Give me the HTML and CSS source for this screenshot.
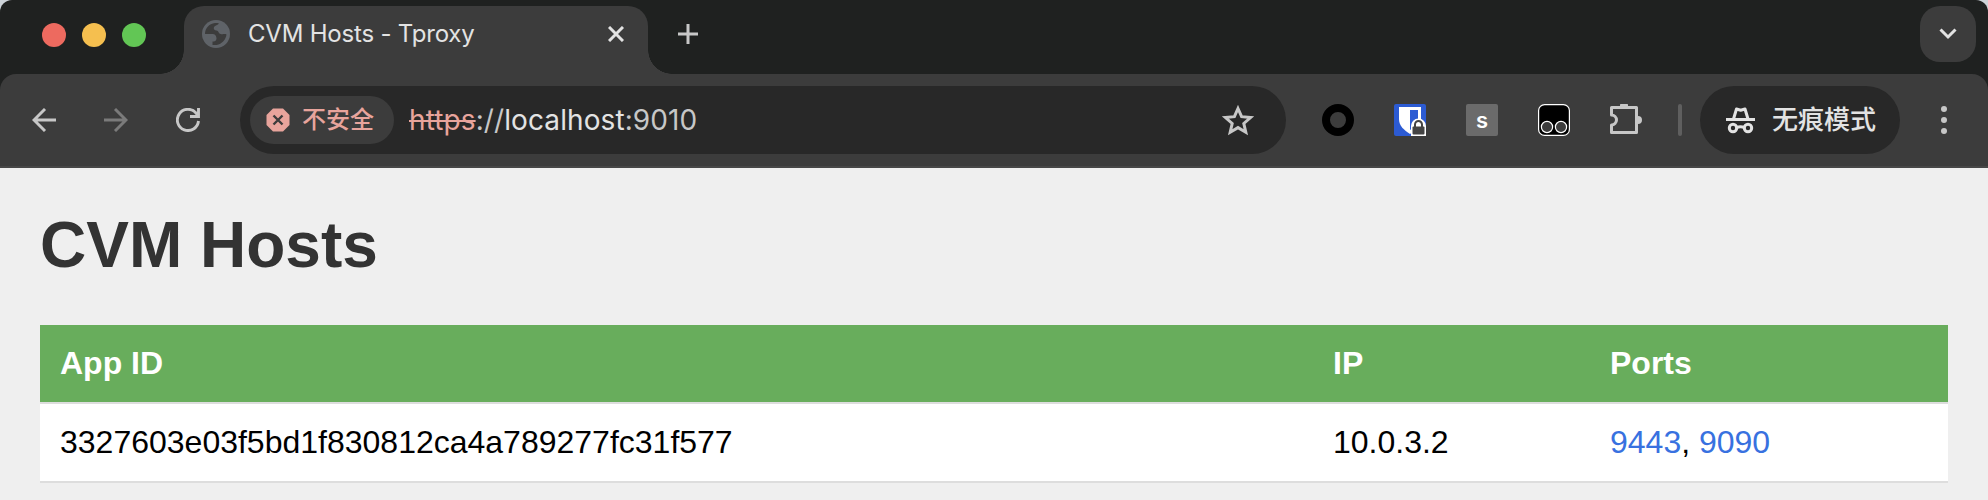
FILE: index.html
```
<!DOCTYPE html>
<html lang="zh-CN">
<head>
<meta charset="utf-8">
<title>CVM Hosts - Tproxy</title>
<link rel="stylesheet" href="styles.css">
</head>
<body>
<div class="window">
  <header class="tab-strip">
    <div class="lights"><i class="light red"></i><i class="light yellow"></i><i class="light green"></i></div>
    <div class="tab">
      <svg class="globe" width="28" height="28" viewBox="0 0 28 28"><circle cx="14" cy="14" r="14" fill="#5f6368"/><path fill="#3c3c3c" d="M3 14C3 8.500 7 3.500 13 3c2 0 3 0 4 .5-1 2-4 1.500-5 3.500-.8 2 .5 3.500 2.500 3.500 2 0 2 3 4 3.500 2.500.7 4.500-.5 6 .5-.5 5-4.500 9.500-10 10.500h-4V21.500c2 0 4-.5 4-3s-1.500-4.500-4-4.500z"/></svg>
      <span class="tab-title">CVM Hosts - Tproxy</span>
      <svg class="close" width="16" height="16" viewBox="0 0 16 16"><path d="M1 1l14 14M15 1L1 15" stroke="#e3e3e3" stroke-width="3"/></svg>
    </div>
    <svg class="plus" width="20" height="20" viewBox="0 0 20 20"><path d="M10 0v20M0 10h20" stroke="#c7c7c7" stroke-width="3"/></svg>
    <div class="tab-search"><svg width="18" height="12" viewBox="0 0 18 12"><path d="M1.500 1.500L9 9l7.500-7.500" fill="none" stroke="#e3e3e3" stroke-width="3"/></svg></div>
  </header>
  <nav class="toolbar">
    <div class="nav-icons">
      <svg width="24" height="24" viewBox="0 0 24 24"><path d="M24 12H2M13 1L2 12l11 11" fill="none" stroke="#c7c7c7" stroke-width="2.900"/></svg>
      <svg width="24" height="24" viewBox="0 0 24 24"><path d="M0 12h22M11 1l11 11-11 11" fill="none" stroke="#7b7b7b" stroke-width="2.900"/></svg>
      <svg width="24" height="24" viewBox="0 0 24 24"><path d="M22.500 13A10.600 10.600 0 1 1 20 5l2 3M22.500 0v8.500H14" fill="none" stroke="#c7c7c7" stroke-width="2.900"/></svg>
    </div>
    <div class="omnibox">
      <div class="chip">
        <svg width="24" height="24" viewBox="0 0 24 24"><path d="M7 .5h10L23.500 7v10L17 23.500H7L.5 17V7z" fill="#e8a49c"/><path d="M7.500 7.500l9 9M16.500 7.500l-9 9" stroke="#3c3c3c" stroke-width="2.400"/></svg>
        <span>不安全</span>
      </div>
      <div class="url"><s>https</s>://<b>localhost</b>:9010</div>
      <svg class="star" width="32" height="31" viewBox="0 0 32 31"><path d="M16 3.500l3.600 8.200 9 .8-6.800 6 2 8.700-7.800-4.600-7.800 4.600 2-8.700-6.800-6 9-.8z" fill="none" stroke="#c7c7c7" stroke-width="3"/></svg>
    </div>
    <div class="extensions">
      <svg width="32" height="32" viewBox="0 0 32 32"><circle cx="16" cy="16" r="12" fill="none" stroke="#000" stroke-width="8"/></svg>
      <svg width="32" height="32" viewBox="0 0 32 32"><rect width="32" height="32" rx="2" fill="#2c5bd3"/><path d="M5 3h22v12c0 7-5 11-11 15C10 26 5 22 5 15z" fill="#fff"/><path d="M16 6h8v9c0 5-3 8-8 11z" fill="#2c5bd3"/><path d="M17 32V22a7.500 7.500 0 0 1 15 0v10z" fill="#fff"/><path d="M21 23v-2.500a3.500 3.500 0 0 1 7 0V23" fill="none" stroke="#444" stroke-width="2"/><rect x="18.500" y="22.500" width="12" height="8" rx="1" fill="#444"/></svg>
      <div class="letter-ext">s</div>
      <svg width="32" height="32" viewBox="0 0 32 32"><rect x=".6" y=".6" width="30.800" height="30.800" rx="6" fill="#000" stroke="#fff" stroke-width="1.200"/><g fill="#3c3c3c" stroke="#fff" stroke-width="1.200"><circle cx="9" cy="23" r="5.600"/><circle cx="23" cy="23" r="5.600"/></g></svg>
      <svg width="32" height="32" viewBox="0 0 32 32"><path d="M1.500 3.500h25v25h-25V21a5 5 0 0 0 0-10z" fill="none" stroke="#c7c7c7" stroke-width="3" stroke-linejoin="round"/><path d="M10 2a4 4 0 0 1 8 0zM28 12a4 4 0 0 1 0 8z" fill="#c7c7c7"/><path d="M10 3a4 4 0 0 1 8 0z" fill="#c7c7c7"/></svg>
    </div>
    <i class="divider"></i>
    <div class="incognito">
      <svg width="30" height="28" viewBox="0 0 30 28"><path d="M0 13.500h29M7.500 13l3-10 4.200 1.200L19 3l3 10" fill="none" stroke="#e3e3e3" stroke-width="3" stroke-linejoin="round"/><g fill="none" stroke="#e3e3e3" stroke-width="3"><circle cx="7" cy="22" r="3.700"/><circle cx="22" cy="22" r="3.700"/><path d="M10.500 21.500q4-1.500 8 0"/></g></svg>
      <span>无痕模式</span>
    </div>
    <svg class="menu" width="6" height="28" viewBox="0 0 6 28" fill="#c7c7c7"><circle cx="3" cy="3" r="3"/><circle cx="3" cy="14" r="3"/><circle cx="3" cy="25" r="3"/></svg>
  </nav>
  <main class="page">
    <h1>CVM Hosts</h1>
    <table>
      <colgroup><col class="col-app"><col class="col-ip"><col></colgroup>
      <thead><tr><th>App ID</th><th>IP</th><th>Ports</th></tr></thead>
      <tbody><tr><td>3327603e03f5bd1f830812ca4a789277fc31f577</td><td>10.0.3.2</td><td><a href="#">9443</a>, <a href="#">9090</a></td></tr></tbody>
    </table>
  </main>
</div>
</body>
</html>
```
FILE: styles.css
```
* { box-sizing: border-box; }
body { margin: 0; background: #cdd3d8; font-family: Inter, "Noto Sans CJK SC", sans-serif; }
svg { display: block; flex: none; }
.window { height: 500px; border-radius: 12px 12px 0 0; overflow: hidden; background: #1f2120; }
.tab-strip { display: flex; height: 74px; padding: 6px 12px 0 42px; }
.lights { display: flex; gap: 16px; padding-top: 17px; width: 142px; }
.light { width: 24px; height: 24px; border-radius: 50%; }
.red { background: #ed6a5f; }
.yellow { background: #f5bf4f; }
.green { background: #62c655; }
.tab { position: relative; display: flex; width: 464px; height: 68px; padding: 0 24px 12px 18px; align-items: center; background: #3c3c3c; border-radius: 20px 20px 0 0; }
.tab::before, .tab::after { content: ""; position: absolute; bottom: 0; width: 24px; height: 24px; }
.tab::before { right: 100%; background: radial-gradient(circle at 0 0, #1f2120 23.5px, #3c3c3c 24px); }
.tab::after { left: 100%; background: radial-gradient(circle at 100% 0, #1f2120 23.5px, #3c3c3c 24px); }
.tab-title { margin-left: 18px; font-size: 24px; line-height: 30px; letter-spacing: -0.2px; color: #e3e3e3; white-space: nowrap; }
.close { margin-left: auto; }
.plus { margin: 18px 0 0 30px; }
.tab-search { display: flex; width: 56px; height: 56px; margin-left: auto; align-items: center; justify-content: center; background: #3c3c3c; border-radius: 20px; }
.toolbar { display: flex; height: 94px; padding: 0 41px 0 32px; align-items: center; background: #3c3c3c; border-bottom: 2px solid #474747; border-radius: 16px 16px 0 0; }
.nav-icons { display: flex; gap: 48px; width: 208px; }
.omnibox { display: flex; width: 1046px; height: 68px; padding: 0 32px 0 10px; align-items: center; background: #282828; border-radius: 34px; }
.chip { display: flex; width: 144px; height: 48px; padding-left: 16px; gap: 12px; align-items: center; background: #3c3c3c; border-radius: 24px; color: #e8a49c; font-size: 24px; font-weight: 500; line-height: 36px; }
.url { margin-left: 15px; font-size: 28px; line-height: 36px; letter-spacing: 0.1px; color: #c7c7c7; white-space: nowrap; }
.url s { color: #e8a49c; }
.url b { color: #e3e3e3; font-weight: 400; }
.star { margin-left: auto; }
.extensions { display: flex; gap: 40px; margin-left: 36px; }
.letter-ext { width: 32px; height: 32px; background: #6b6b6b; border-radius: 2px; color: #fff; font-size: 22px; font-weight: 600; line-height: 33px; text-align: center; }
.divider { width: 4px; height: 32px; margin: 0 18px 0 36px; background: #5f5f5f; border-radius: 2px; }
.incognito { display: flex; width: 200px; height: 68px; padding-left: 26px; gap: 16px; align-items: center; background: #282828; border-radius: 34px; color: #e3e3e3; font-size: 26px; font-weight: 500; line-height: 38px; white-space: nowrap; }
.menu { margin-left: auto; }
.page { height: 332px; padding: 40px; background: #efefef; font-family: "Liberation Sans", Arial, sans-serif; }
h1 { margin: 0 0 42px; color: #333; font-size: 64px; line-height: 75px; }
table { width: 100%; table-layout: fixed; border-spacing: 0; font-size: 32px; line-height: 37px; }
.col-app { width: 1273px; }
.col-ip { width: 277px; }
th, td { padding: 20px; border-bottom: 2px solid #ddd; text-align: left; }
th { background: #68ad5c; background-clip: padding-box; color: #fff; }
td { background: #fff; color: #000; }
a { color: #3871e0; text-decoration: none; }
```
